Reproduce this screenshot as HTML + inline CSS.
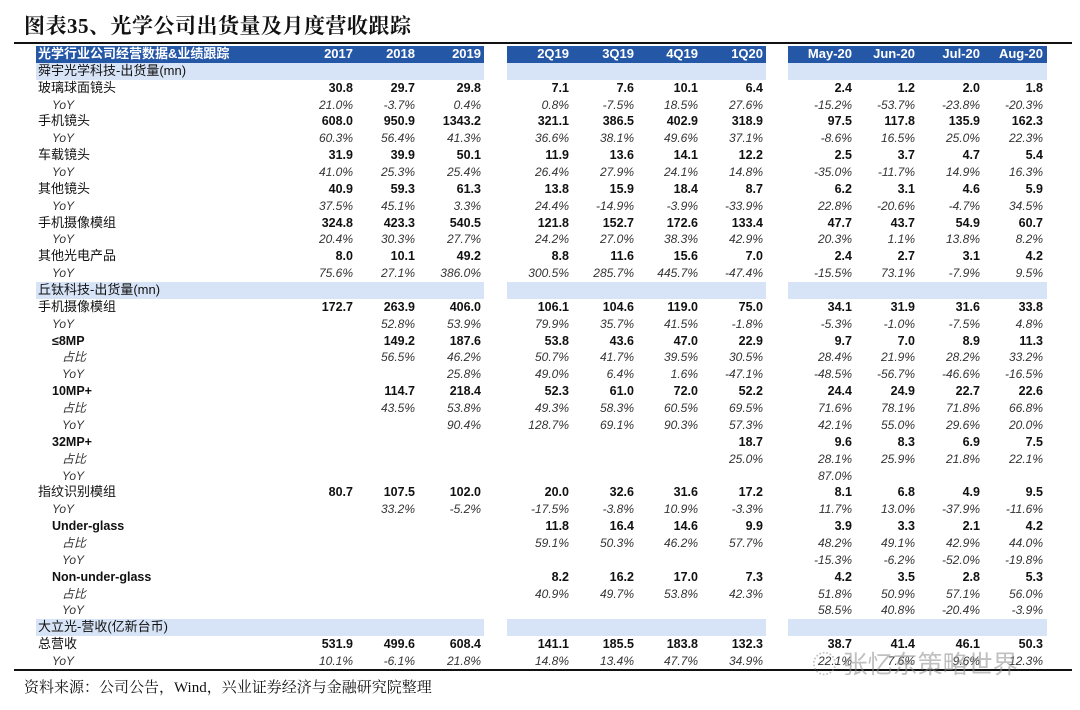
<!DOCTYPE html>
<html><head><meta charset="utf-8"><style>
body{margin:0;width:1080px;height:710px;background:#fff;position:relative;overflow:hidden;font-family:"Liberation Sans","Noto Sans CJK SC",sans-serif;color:#111}
.t{position:absolute;left:24px;top:10px;font-family:"Liberation Serif","Noto Serif CJK SC",serif;font-weight:bold;font-size:21px;letter-spacing:0.5px}
.ln{position:absolute;left:14px;width:1058px;height:2px;background:#111}
.bx{position:absolute;height:17px}
.h{background:#2557a7}
.lb{background:#d7e4f7}
.r{position:absolute;left:0;width:1080px;height:16.86px;line-height:16.86px;font-size:12.5px;font-weight:bold;white-space:nowrap}
.r.y{font-weight:normal;font-style:italic;color:#333;font-size:12px}
.r.hd{color:#fff;font-size:13px}
.r span{position:absolute;text-align:right;width:70px}
.l{left:38px;text-align:left!important;width:300px!important}
.n{font-weight:normal;font-size:13px}
.l2{left:52px!important}.l3{left:62px!important}
.a{left:283px}.b{left:345px}.c{left:411px}.d{left:499px}.e{left:564px}.f{left:628px}.g{left:693px}.h1{left:782px}.i{left:845px}.j{left:910px}.k{left:973px}
.src{position:absolute;left:24px;top:676px;font-family:"Liberation Serif","Noto Serif CJK SC",serif;font-size:15px}
.wm{position:absolute;left:812px;top:645px;font-size:25px;color:rgba(140,140,140,0.55);font-family:"Noto Sans CJK SC",sans-serif}
</style></head><body>
<div class="t">图表35、光学公司出货量及月度营收跟踪</div>
<div class="ln" style="top:42px"></div>
<div class="bx h" style="left:36px;width:448px;top:46px"></div>
<div class="bx h" style="left:507px;width:259px;top:46px"></div>
<div class="bx h" style="left:788px;width:259px;top:46px"></div>
<div class="bx lb" style="left:36px;width:448px;top:63px"></div>
<div class="bx lb" style="left:507px;width:259px;top:63px"></div>
<div class="bx lb" style="left:788px;width:259px;top:63px"></div>
<div class="bx lb" style="left:36px;width:448px;top:282px"></div>
<div class="bx lb" style="left:507px;width:259px;top:282px"></div>
<div class="bx lb" style="left:788px;width:259px;top:282px"></div>
<div class="bx lb" style="left:36px;width:448px;top:619px"></div>
<div class="bx lb" style="left:507px;width:259px;top:619px"></div>
<div class="bx lb" style="left:788px;width:259px;top:619px"></div>

<div class="r hd" style="top:46px"><span class="l">光学行业公司经营数据&amp;业绩跟踪</span><span class="a">2017</span><span class="b">2018</span><span class="c">2019</span><span class="d">2Q19</span><span class="e">3Q19</span><span class="f">4Q19</span><span class="g">1Q20</span><span class="h1">May-20</span><span class="i">Jun-20</span><span class="j">Jul-20</span><span class="k">Aug-20</span></div>
<div class="r" style="top:62.86px"><span class="l n">舜宇光学科技-出货量(mn)</span></div>
<div class="r" style="top:79.72px"><span class="l n">玻璃球面镜头</span><span class="a">30.8</span><span class="b">29.7</span><span class="c">29.8</span><span class="d">7.1</span><span class="e">7.6</span><span class="f">10.1</span><span class="g">6.4</span><span class="h1">2.4</span><span class="i">1.2</span><span class="j">2.0</span><span class="k">1.8</span></div>
<div class="r y" style="top:96.58px"><span class="l l2">YoY</span><span class="a">21.0%</span><span class="b">-3.7%</span><span class="c">0.4%</span><span class="d">0.8%</span><span class="e">-7.5%</span><span class="f">18.5%</span><span class="g">27.6%</span><span class="h1">-15.2%</span><span class="i">-53.7%</span><span class="j">-23.8%</span><span class="k">-20.3%</span></div>
<div class="r" style="top:113.44px"><span class="l n">手机镜头</span><span class="a">608.0</span><span class="b">950.9</span><span class="c">1343.2</span><span class="d">321.1</span><span class="e">386.5</span><span class="f">402.9</span><span class="g">318.9</span><span class="h1">97.5</span><span class="i">117.8</span><span class="j">135.9</span><span class="k">162.3</span></div>
<div class="r y" style="top:130.3px"><span class="l l2">YoY</span><span class="a">60.3%</span><span class="b">56.4%</span><span class="c">41.3%</span><span class="d">36.6%</span><span class="e">38.1%</span><span class="f">49.6%</span><span class="g">37.1%</span><span class="h1">-8.6%</span><span class="i">16.5%</span><span class="j">25.0%</span><span class="k">22.3%</span></div>
<div class="r" style="top:147.16px"><span class="l n">车载镜头</span><span class="a">31.9</span><span class="b">39.9</span><span class="c">50.1</span><span class="d">11.9</span><span class="e">13.6</span><span class="f">14.1</span><span class="g">12.2</span><span class="h1">2.5</span><span class="i">3.7</span><span class="j">4.7</span><span class="k">5.4</span></div>
<div class="r y" style="top:164.02px"><span class="l l2">YoY</span><span class="a">41.0%</span><span class="b">25.3%</span><span class="c">25.4%</span><span class="d">26.4%</span><span class="e">27.9%</span><span class="f">24.1%</span><span class="g">14.8%</span><span class="h1">-35.0%</span><span class="i">-11.7%</span><span class="j">14.9%</span><span class="k">16.3%</span></div>
<div class="r" style="top:180.88px"><span class="l n">其他镜头</span><span class="a">40.9</span><span class="b">59.3</span><span class="c">61.3</span><span class="d">13.8</span><span class="e">15.9</span><span class="f">18.4</span><span class="g">8.7</span><span class="h1">6.2</span><span class="i">3.1</span><span class="j">4.6</span><span class="k">5.9</span></div>
<div class="r y" style="top:197.74px"><span class="l l2">YoY</span><span class="a">37.5%</span><span class="b">45.1%</span><span class="c">3.3%</span><span class="d">24.4%</span><span class="e">-14.9%</span><span class="f">-3.9%</span><span class="g">-33.9%</span><span class="h1">22.8%</span><span class="i">-20.6%</span><span class="j">-4.7%</span><span class="k">34.5%</span></div>
<div class="r" style="top:214.6px"><span class="l n">手机摄像模组</span><span class="a">324.8</span><span class="b">423.3</span><span class="c">540.5</span><span class="d">121.8</span><span class="e">152.7</span><span class="f">172.6</span><span class="g">133.4</span><span class="h1">47.7</span><span class="i">43.7</span><span class="j">54.9</span><span class="k">60.7</span></div>
<div class="r y" style="top:231.46px"><span class="l l2">YoY</span><span class="a">20.4%</span><span class="b">30.3%</span><span class="c">27.7%</span><span class="d">24.2%</span><span class="e">27.0%</span><span class="f">38.3%</span><span class="g">42.9%</span><span class="h1">20.3%</span><span class="i">1.1%</span><span class="j">13.8%</span><span class="k">8.2%</span></div>
<div class="r" style="top:248.32px"><span class="l n">其他光电产品</span><span class="a">8.0</span><span class="b">10.1</span><span class="c">49.2</span><span class="d">8.8</span><span class="e">11.6</span><span class="f">15.6</span><span class="g">7.0</span><span class="h1">2.4</span><span class="i">2.7</span><span class="j">3.1</span><span class="k">4.2</span></div>
<div class="r y" style="top:265.18px"><span class="l l2">YoY</span><span class="a">75.6%</span><span class="b">27.1%</span><span class="c">386.0%</span><span class="d">300.5%</span><span class="e">285.7%</span><span class="f">445.7%</span><span class="g">-47.4%</span><span class="h1">-15.5%</span><span class="i">73.1%</span><span class="j">-7.9%</span><span class="k">9.5%</span></div>
<div class="r" style="top:282.04px"><span class="l n">丘钛科技-出货量(mn)</span></div>
<div class="r" style="top:298.9px"><span class="l n">手机摄像模组</span><span class="a">172.7</span><span class="b">263.9</span><span class="c">406.0</span><span class="d">106.1</span><span class="e">104.6</span><span class="f">119.0</span><span class="g">75.0</span><span class="h1">34.1</span><span class="i">31.9</span><span class="j">31.6</span><span class="k">33.8</span></div>
<div class="r y" style="top:315.76px"><span class="l l2">YoY</span><span class="b">52.8%</span><span class="c">53.9%</span><span class="d">79.9%</span><span class="e">35.7%</span><span class="f">41.5%</span><span class="g">-1.8%</span><span class="h1">-5.3%</span><span class="i">-1.0%</span><span class="j">-7.5%</span><span class="k">4.8%</span></div>
<div class="r" style="top:332.62px"><span class="l l2">≤8MP</span><span class="b">149.2</span><span class="c">187.6</span><span class="d">53.8</span><span class="e">43.6</span><span class="f">47.0</span><span class="g">22.9</span><span class="h1">9.7</span><span class="i">7.0</span><span class="j">8.9</span><span class="k">11.3</span></div>
<div class="r y" style="top:349.48px"><span class="l l3">占比</span><span class="b">56.5%</span><span class="c">46.2%</span><span class="d">50.7%</span><span class="e">41.7%</span><span class="f">39.5%</span><span class="g">30.5%</span><span class="h1">28.4%</span><span class="i">21.9%</span><span class="j">28.2%</span><span class="k">33.2%</span></div>
<div class="r y" style="top:366.34px"><span class="l l3">YoY</span><span class="c">25.8%</span><span class="d">49.0%</span><span class="e">6.4%</span><span class="f">1.6%</span><span class="g">-47.1%</span><span class="h1">-48.5%</span><span class="i">-56.7%</span><span class="j">-46.6%</span><span class="k">-16.5%</span></div>
<div class="r" style="top:383.2px"><span class="l l2">10MP+</span><span class="b">114.7</span><span class="c">218.4</span><span class="d">52.3</span><span class="e">61.0</span><span class="f">72.0</span><span class="g">52.2</span><span class="h1">24.4</span><span class="i">24.9</span><span class="j">22.7</span><span class="k">22.6</span></div>
<div class="r y" style="top:400.06px"><span class="l l3">占比</span><span class="b">43.5%</span><span class="c">53.8%</span><span class="d">49.3%</span><span class="e">58.3%</span><span class="f">60.5%</span><span class="g">69.5%</span><span class="h1">71.6%</span><span class="i">78.1%</span><span class="j">71.8%</span><span class="k">66.8%</span></div>
<div class="r y" style="top:416.92px"><span class="l l3">YoY</span><span class="c">90.4%</span><span class="d">128.7%</span><span class="e">69.1%</span><span class="f">90.3%</span><span class="g">57.3%</span><span class="h1">42.1%</span><span class="i">55.0%</span><span class="j">29.6%</span><span class="k">20.0%</span></div>
<div class="r" style="top:433.78px"><span class="l l2">32MP+</span><span class="g">18.7</span><span class="h1">9.6</span><span class="i">8.3</span><span class="j">6.9</span><span class="k">7.5</span></div>
<div class="r y" style="top:450.64px"><span class="l l3">占比</span><span class="g">25.0%</span><span class="h1">28.1%</span><span class="i">25.9%</span><span class="j">21.8%</span><span class="k">22.1%</span></div>
<div class="r y" style="top:467.5px"><span class="l l3">YoY</span><span class="h1">87.0%</span></div>
<div class="r" style="top:484.36px"><span class="l n">指纹识别模组</span><span class="a">80.7</span><span class="b">107.5</span><span class="c">102.0</span><span class="d">20.0</span><span class="e">32.6</span><span class="f">31.6</span><span class="g">17.2</span><span class="h1">8.1</span><span class="i">6.8</span><span class="j">4.9</span><span class="k">9.5</span></div>
<div class="r y" style="top:501.22px"><span class="l l2">YoY</span><span class="b">33.2%</span><span class="c">-5.2%</span><span class="d">-17.5%</span><span class="e">-3.8%</span><span class="f">10.9%</span><span class="g">-3.3%</span><span class="h1">11.7%</span><span class="i">13.0%</span><span class="j">-37.9%</span><span class="k">-11.6%</span></div>
<div class="r" style="top:518.08px"><span class="l l2">Under-glass</span><span class="d">11.8</span><span class="e">16.4</span><span class="f">14.6</span><span class="g">9.9</span><span class="h1">3.9</span><span class="i">3.3</span><span class="j">2.1</span><span class="k">4.2</span></div>
<div class="r y" style="top:534.94px"><span class="l l3">占比</span><span class="d">59.1%</span><span class="e">50.3%</span><span class="f">46.2%</span><span class="g">57.7%</span><span class="h1">48.2%</span><span class="i">49.1%</span><span class="j">42.9%</span><span class="k">44.0%</span></div>
<div class="r y" style="top:551.8px"><span class="l l3">YoY</span><span class="h1">-15.3%</span><span class="i">-6.2%</span><span class="j">-52.0%</span><span class="k">-19.8%</span></div>
<div class="r" style="top:568.66px"><span class="l l2">Non-under-glass</span><span class="d">8.2</span><span class="e">16.2</span><span class="f">17.0</span><span class="g">7.3</span><span class="h1">4.2</span><span class="i">3.5</span><span class="j">2.8</span><span class="k">5.3</span></div>
<div class="r y" style="top:585.52px"><span class="l l3">占比</span><span class="d">40.9%</span><span class="e">49.7%</span><span class="f">53.8%</span><span class="g">42.3%</span><span class="h1">51.8%</span><span class="i">50.9%</span><span class="j">57.1%</span><span class="k">56.0%</span></div>
<div class="r y" style="top:602.38px"><span class="l l3">YoY</span><span class="h1">58.5%</span><span class="i">40.8%</span><span class="j">-20.4%</span><span class="k">-3.9%</span></div>
<div class="r" style="top:619.24px"><span class="l n">大立光-营收(亿新台币)</span></div>
<div class="r" style="top:636.1px"><span class="l n">总营收</span><span class="a">531.9</span><span class="b">499.6</span><span class="c">608.4</span><span class="d">141.1</span><span class="e">185.5</span><span class="f">183.8</span><span class="g">132.3</span><span class="h1">38.7</span><span class="i">41.4</span><span class="j">46.1</span><span class="k">50.3</span></div>
<div class="r y" style="top:652.96px"><span class="l l2">YoY</span><span class="a">10.1%</span><span class="b">-6.1%</span><span class="c">21.8%</span><span class="d">14.8%</span><span class="e">13.4%</span><span class="f">47.7%</span><span class="g">34.9%</span><span class="h1">22.1%</span><span class="i">7.6%</span><span class="j">9.6%</span><span class="k">12.3%</span></div>
<div class="ln" style="top:669px"></div>
<div class="wm">◌ 张忆东策略世界</div>
<div class="src">资料来源：公司公告，Wind，兴业证券经济与金融研究院整理</div>
</body></html>
